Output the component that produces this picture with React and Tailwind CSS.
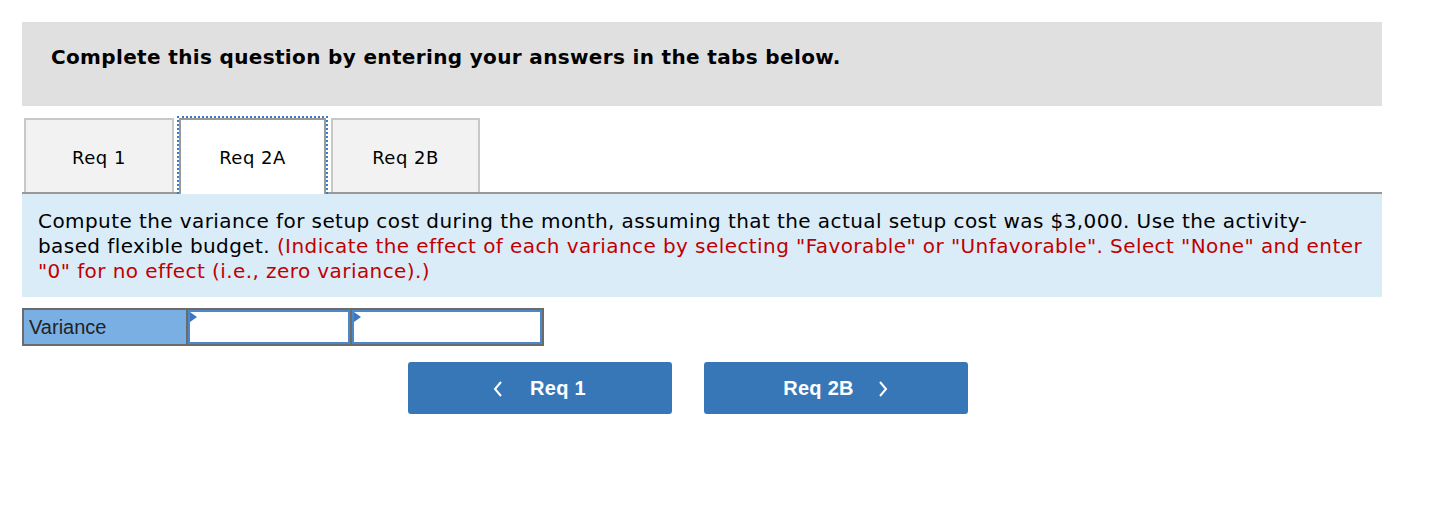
import React from "react";

const V = { fontFamily: '"DejaVu Sans", Verdana, sans-serif' };
const A = { fontFamily: '"Liberation Sans", Arial, sans-serif' };

export default function App() {
  return (
    <div className="w-[1440px] h-[510px] bg-white pt-[22px] pl-[22px]">
      <div className="w-[1360px]">
        <div className="h-[84px] bg-[#e0e0e0] flex items-center pl-[29px]">
          <div style={V} className="text-[20px] tracking-[0.35px] font-bold text-black pb-[14px]">
            Complete this question by entering your answers in the tabs below.
          </div>
        </div>

        <div className="mt-[13px] flex items-end border-b-2 border-[#999] h-[75px] pl-[2px]">
          <div style={V} className="w-[150px] h-[74px] bg-[#f2f2f2] border-2 border-b-0 border-[#c8c8c8] flex items-center justify-center text-[18px] tracking-[0.5px] text-black pt-[2px]">
            Req 1
          </div>
          <div className="ml-[3px] w-[151px] h-[78px] -mb-[2px] border-2 border-b-0 border-dotted border-[#3a7cc4]">
            <div style={V} className="w-full h-full bg-white border-2 border-b-0 border-[#999] flex items-center justify-center text-[18px] tracking-[0.5px] text-black">
              Req 2A
            </div>
          </div>
          <div style={V} className="ml-[3px] w-[149px] h-[74px] bg-[#f2f2f2] border-2 border-b-0 border-[#c8c8c8] flex items-center justify-center text-[18px] tracking-[0.5px] text-black pt-[2px]">
            Req 2B
          </div>
        </div>

        <div style={V} className="h-[103px] bg-[#dbecf9] pl-[16px] pt-[15px] text-[20px] tracking-[0.42px] leading-[25px] text-black">
          Compute the variance for setup cost during the month, assuming that the actual setup cost was $3,000. Use the activity-
          <br />
          based flexible budget.{" "}
          <span className="text-[#c00000]">
            (Indicate the effect of each variance by selecting "Favorable" or "Unfavorable". Select "None" and enter
            <br />
            "0" for no effect (i.e., zero variance).)
          </span>
        </div>

        <div className="mt-[11px] flex w-[522px] h-[38px] border-2 border-[#6b6b6b] bg-[#6b6b6b] gap-[2px]">
          <div style={A} className="w-[162px] bg-[#7aafe4] flex items-center pl-[5px] text-[20px] text-[#222]">
            Variance
          </div>
          <div className="relative w-[162px] bg-white border-2 border-[#4a88cb]">
            <div className="absolute left-0 top-0 w-0 h-0 border-t-[5px] border-b-[5px] border-l-[7px] border-t-transparent border-b-transparent border-l-[#3a78c0]" />
          </div>
          <div className="relative flex-1 bg-white border-2 border-[#4a88cb]">
            <div className="absolute left-0 top-0 w-0 h-0 border-t-[5px] border-b-[5px] border-l-[7px] border-t-transparent border-b-transparent border-l-[#3a78c0]" />
          </div>
        </div>

        <div className="mt-[16px] flex pl-[386px] gap-[32px]">
          <button style={A} className="w-[264px] h-[52px] rounded-[3px] bg-[#3777b8] text-white text-[20px] font-bold flex items-center justify-center">
            <svg width="12" height="18" viewBox="0 0 12 18" className="mr-[26px] mt-[1px]">
              <path d="M9 2 L3 9 L9 16" fill="none" stroke="white" strokeWidth="2" />
            </svg>
            <span className="mr-[2px] tracking-[0.3px]">Req 1</span>
          </button>
          <button style={A} className="w-[264px] h-[52px] rounded-[3px] bg-[#3777b8] text-white text-[20px] font-bold flex items-center justify-center">
            <span className="mr-[1px] tracking-[0.3px]">Req 2B</span>
            <svg width="12" height="18" viewBox="0 0 12 18" className="ml-[22px] mt-[1px]">
              <path d="M3 2 L9 9 L3 16" fill="none" stroke="white" strokeWidth="2" />
            </svg>
          </button>
        </div>
      </div>
    </div>
  );
}
